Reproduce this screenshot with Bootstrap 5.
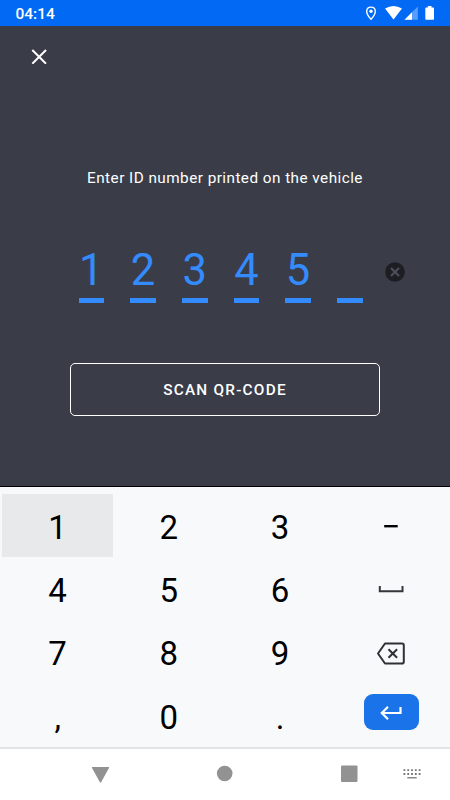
<!DOCTYPE html>
<html lang="en">
<head>
<meta charset="utf-8">
<meta name="viewport" content="width=device-width, initial-scale=1">
<title>Enter vehicle ID</title>
<link href="https://cdn.jsdelivr.net/npm/bootstrap@5.3.0/dist/css/bootstrap.min.css" rel="stylesheet">
<style>
body{font-family:Roboto,sans-serif;width:450px;height:800px;overflow:hidden;background:#fff}
svg{display:block;flex:none}
.status-bar{height:26px;background:#0269f4;padding:1px 15px 0 15.5px;font-size:15.5px;font-weight:500;line-height:26px}
.entry-screen{height:461px;background:#3a3d48;border-bottom:1px solid #000}
.close-btn{margin:22px 0 0 31px;width:16px;height:16px}
.prompt{margin-top:102px;height:24px;line-height:24px;font-size:15.3px;letter-spacing:.46px}
.code-row{margin:55px 0 0 78.5px;height:58px}
.digit-cell{width:25.7px;margin-right:26px;height:58px;border-bottom:5px solid #348bfd;color:#348bfd;font-size:43.5px;line-height:51px}
.clear-btn{margin:17px 0 0 -3.5px}
.scan-btn{margin:60px auto 0;width:310px;height:53px;border:1.5px solid #fff;border-radius:5px;font-size:15.3px;font-weight:500;letter-spacing:1.25px;padding-top:2px}
.keypad{height:260px;padding:7px 3px 0 2px;background:#f8f9fb}
.key{height:63.35px;font-size:33px;line-height:1;color:#000;padding-top:2.8px}
.key-pressed{background:#e8e9ea}
.enter-key{width:55px;height:36px;border-radius:9px;background:#1a73e8;margin-top:-10px}
.nav-strip{height:53px;border-top:2px solid #e3e4e5}
</style>
</head>
<body>
<header class="status-bar d-flex justify-content-between text-white">
  <span>04:14</span>
  <svg width="70" height="24" viewBox="365 1 70 24" fill="#fff">
    <path d="M371 7.100c-2.600 0-4.300 1.900-4.300 4.300 0 3.100 4.300 7.900 4.300 7.900s4.300-4.800 4.300-7.900c0-2.400-1.700-4.300-4.300-4.300z" fill="none" stroke="#fff" stroke-width="1.400"/>
    <circle cx="371" cy="11.300" r="1.700"/>
    <path d="M385 8.500Q393.500 3.500 402 8.500L393.500 19.500z"/>
    <path d="M404.500 19.800L417.800 6.500V19.800z" opacity=".35"/>
    <path d="M404.500 19.800L412 12.300V19.800z"/>
    <path d="M427.800 6h3.700v1.500h1.700q.8 0 .8.800V19q0 .8-.8.800h-7.100q-.8 0-.8-.8V8.300q0-.8.8-.8h1.700z"/>
  </svg>
</header>
<main class="entry-screen d-flex flex-column text-white">
  <svg class="close-btn" viewBox="0 0 16 16" stroke="#fff" stroke-width="2"><path d="M1.300 2L15 15.700M15 2L1.300 15.700"/></svg>
  <div class="prompt text-center">Enter ID number printed on the vehicle</div>
  <div class="code-row d-flex">
    <div class="digit-cell text-center">1</div>
    <div class="digit-cell text-center">2</div>
    <div class="digit-cell text-center">3</div>
    <div class="digit-cell text-center">4</div>
    <div class="digit-cell text-center">5</div>
    <div class="digit-cell"></div>
    <svg class="clear-btn" width="20" height="20" viewBox="0 0 20 20"><circle cx="10" cy="10" r="9.800" fill="#1c1e23"/><path d="M6 6l8 8M14 6l-8 8" stroke="#4c4f59" stroke-width="2.200"/></svg>
  </div>
  <button class="scan-btn bg-transparent text-white" type="button">SCAN QR-CODE</button>
</main>
<section class="keypad">
  <div class="row row-cols-4 g-0 text-center">
    <div class="col key key-pressed d-flex align-items-center justify-content-center">1</div>
    <div class="col key d-flex align-items-center justify-content-center">2</div>
    <div class="col key d-flex align-items-center justify-content-center">3</div>
    <div class="col key d-flex align-items-center justify-content-center"><svg width="28" height="28"><path d="M7.200 12h13.500v2.400H7.200z"/></svg></div>
    <div class="col key d-flex align-items-center justify-content-center">4</div>
    <div class="col key d-flex align-items-center justify-content-center">5</div>
    <div class="col key d-flex align-items-center justify-content-center">6</div>
    <div class="col key d-flex align-items-center justify-content-center"><svg width="28" height="28" fill="none" stroke="#35363a" stroke-width="2"><path d="M2.800 10v5.300h22.700v-5.300"/></svg></div>
    <div class="col key d-flex align-items-center justify-content-center">7</div>
    <div class="col key d-flex align-items-center justify-content-center">8</div>
    <div class="col key d-flex align-items-center justify-content-center">9</div>
    <div class="col key d-flex align-items-center justify-content-center"><svg width="30" height="28" fill="none" stroke="#303135" stroke-width="2"><path d="M9 3.500H26q1.800 0 1.800 1.800V21.700q0 1.800-1.800 1.800H9L2 13.500z" stroke-linejoin="round"/><path d="M12.500 9.200l8.600 8.600M21.100 9.200l-8.600 8.600"/></svg></div>
    <div class="col key d-flex align-items-center justify-content-center">,</div>
    <div class="col key d-flex align-items-center justify-content-center">0</div>
    <div class="col key d-flex align-items-center justify-content-center">.</div>
    <div class="col key d-flex align-items-center justify-content-center"><div class="enter-key d-flex align-items-center justify-content-center"><svg width="24" height="20" fill="none" stroke="#fff" stroke-width="2.200"><path d="M21.500 5v6H3M9 4.800L2.800 11 9 17.200"/></svg></div></div>
  </div>
</section>
<footer class="nav-strip">
  <svg width="450" height="51" viewBox="0 749 450 51" fill="#929292">
    <path d="M92.300 767h16.400q.8 0 .4.700l-8 14.500q-.6.900-1.200 0l-8-14.500q-.4-.7.400-.7z"/>
    <circle cx="224.700" cy="773.500" r="7.800"/>
    <rect x="341" y="765.500" width="16.500" height="16.500" rx="1"/>
    <path d="M403.500 770.200h17M403.500 774h17" stroke="#777" stroke-width="1.800" stroke-dasharray="1.800 2"/>
    <path d="M407.300 777h9.400v1.500h-9.400z" fill="#888"/>
  </svg>
</footer>
<script src="https://cdn.jsdelivr.net/npm/bootstrap@5.3.0/dist/js/bootstrap.bundle.min.js"></script>
</body>
</html>
